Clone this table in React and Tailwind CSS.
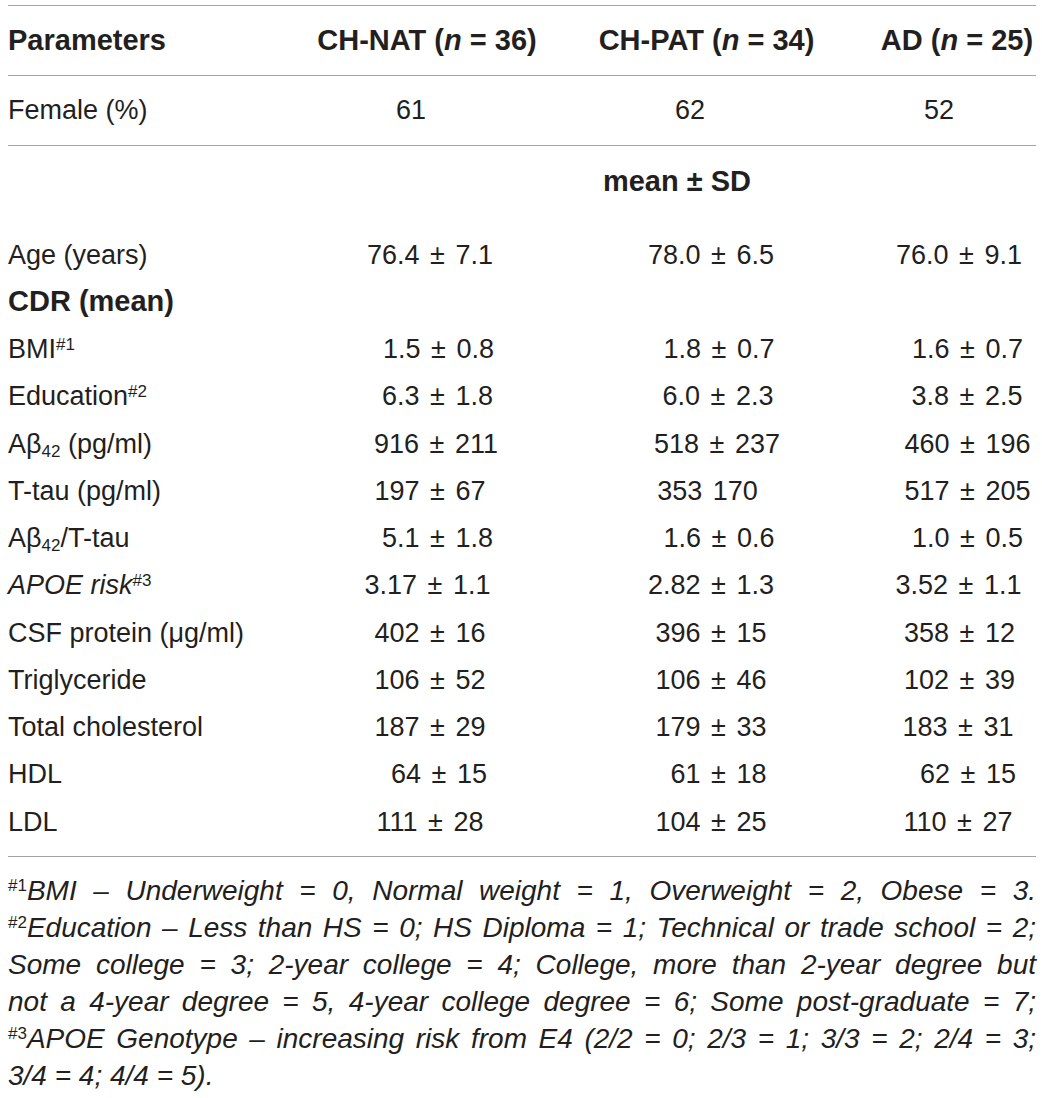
const cols = "grid grid-cols-[308px_228px_334px_158px] items-center";

function Sup({ children }) {
  return <sup className="text-[17px] not-italic">{children}</sup>;
}

function Ab() {
  return (
    <>
      Aβ<sub className="text-[17px]">42</sub>
    </>
  );
}

const rows = [
  { label: "Age (years)", v: [["76.4 ± 7.1", ""], ["78.0 ± 6.5", ""], ["76.0 ± 9.1", "pl-[4px]"]] },
  { label: <span className="font-bold text-[29px]">CDR (mean)</span>, v: [] },
  { label: <>BMI<Sup>#1</Sup></>, v: [["1.5 ± 0.8", "pl-[17px]"], ["1.8 ± 0.7", "pl-[16px]"], ["1.6 ± 0.7", "pl-[21px]"]] },
  { label: <>Education<Sup>#2</Sup></>, v: [["6.3 ± 1.8", "pl-[15px]"], ["6.0 ± 2.3", "pl-[14px]"], ["3.8 ± 2.5", "pl-[20px]"]] },
  { label: <><Ab /> (pg/ml)</>, v: [["916 ± 211", "pl-[12px]"], ["518 ± 237", "pl-[12px]"], ["460 ± 196", "pl-[21px]"]] },
  { label: "T-tau (pg/ml)", v: [["197 ± 67", ""], ["353 170", "pr-[7px]"], ["517 ± 205", "pl-[21px]"]] },
  { label: <><Ab />/T-tau</>, v: [["5.1 ± 1.8", "pl-[15px]"], ["1.6 ± 0.6", "pl-[16px]"], ["1.0 ± 0.5", "pl-[21px]"]] },
  { label: <><i>APOE risk</i><Sup>#3</Sup></>, v: [["3.17 ± 1.1", "pr-[5px]"], ["2.82 ± 1.3", ""], ["3.52 ± 1.1", "pl-[3px]"]] },
  { label: "CSF protein (μg/ml)", v: [["402 ± 16", ""], ["396 ± 15", ""], ["358 ± 12", "pl-[5px]"]] },
  { label: "Triglyceride", v: [["106 ± 52", ""], ["106 ± 46", ""], ["102 ± 39", "pl-[5px]"]] },
  { label: "Total cholesterol", v: [["187 ± 29", ""], ["179 ± 33", ""], ["183 ± 31", "pl-[2px]"]] },
  { label: "HDL", v: [["64 ± 15", "pl-[18px]"], ["61 ± 18", "pl-[15px]"], ["62 ± 15", "pl-[22px]"]] },
  { label: "LDL", v: [["111 ± 28", ""], ["104 ± 25", ""], ["110 ± 27", "pl-[2px]"]] },
];

const notes = [
  <><Sup>#1</Sup>BMI – Underweight = 0, Normal weight = 1, Overweight = 2, Obese = 3.</>,
  <><Sup>#2</Sup>Education – Less than HS = 0; HS Diploma = 1; Technical or trade school = 2;</>,
  <>Some college = 3; 2-year college = 4; College, more than 2-year degree but</>,
  <>not a 4-year degree = 5, 4-year college degree = 6; Some post-graduate = 7;</>,
  <><Sup>#3</Sup>APOE Genotype – increasing risk from E4 (2/2 = 0; 2/3 = 1; 3/3 = 2; 2/4 = 3;</>,
];

export default function App() {
  return (
    <div className="min-h-screen bg-white text-[#231f20] text-[27px] font-['Liberation_Sans',Arial,sans-serif]">
      <div className="pl-[8px] pr-[6px] pt-[5px]">
        <div className="border-t border-[#a3a3a3]">
          {/* header */}
          <div className={`${cols} h-[70px] border-b border-[#a3a3a3] font-bold text-[29px] whitespace-nowrap`}>
            <div>Parameters</div>
            <div className="text-center pr-[6px]">CH-NAT (<i>n</i> = 36)</div>
            <div className="text-center pr-[9px]">CH-PAT (<i>n</i> = 34)</div>
            <div className="text-center">AD (<i>n</i> = 25)</div>
          </div>

          <div className={`${cols} h-[70px] border-b border-[#a3a3a3] whitespace-nowrap`}>
            <div>Female (%)</div>
            <div className="text-center pr-[38px]">61</div>
            <div className="text-center pr-[42px]">62</div>
            <div className="text-center pr-[36px]">52</div>
          </div>

          <div className="pt-[12px] pb-[10px] border-b border-[#a3a3a3]">
            <div className={`${cols} h-[47.25px] whitespace-nowrap`}>
              <div />
              <div />
              <div className="text-center pr-[68px] font-bold text-[29px]">mean ± SD</div>
              <div />
            </div>
            <div className="mt-[26px]">
              {rows.map((r, i) => (
                <div key={i} className={`${cols} h-[47.25px] whitespace-nowrap`}>
                  <div>{r.label}</div>
                  {[0, 1, 2].map((j) => (
                    <div key={j} className={`text-center [word-spacing:3px] ${r.v[j] ? r.v[j][1] : ""}`}>
                      {r.v[j] ? r.v[j][0] : ""}
                    </div>
                  ))}
                </div>
              ))}
            </div>
          </div>

          {/* footnotes */}
          <div className="pt-[15px] italic text-[28px] leading-[37px]">
            {notes.map((n, i) => (
              <div key={i} className="text-justify [text-align-last:justify]">
                {n}
              </div>
            ))}
            <div>3/4 = 4; 4/4 = 5).</div>
          </div>
        </div>
      </div>
    </div>
  );
}
